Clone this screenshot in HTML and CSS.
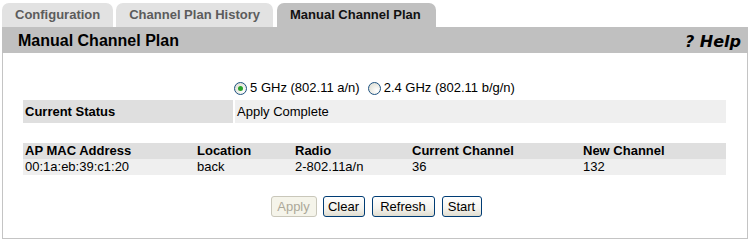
FILE: index.html
```html
<!DOCTYPE html>
<html>
<head>
<meta charset="utf-8">
<link rel="stylesheet" href="styles.css">
</head>
<body>
<div class="page">
  <div class="tabs">
    <div class="tab">Configuration</div>
    <div class="tab">Channel Plan History</div>
    <div class="tab tab-active">Manual Channel Plan</div>
  </div>
  <div class="titlebar">
    <div class="title">Manual Channel Plan</div>
    <div class="help">? Help</div>
  </div>
  <div class="panel">
    <div class="bands">
      <label class="band"><span class="radio radio-on"></span>5 GHz (802.11 a/n)</label>
      <label class="band"><span class="radio"></span>2.4 GHz (802.11 b/g/n)</label>
    </div>
    <div class="status">
      <div class="status-label">Current Status</div>
      <div class="status-value">Apply Complete</div>
    </div>
    <div class="aps">
      <div class="aps-head">AP MAC Address</div>
      <div class="aps-head">Location</div>
      <div class="aps-head">Radio</div>
      <div class="aps-head">Current Channel</div>
      <div class="aps-head">New Channel</div>
      <div class="aps-cell">00:1a:eb:39:c1:20</div>
      <div class="aps-cell">back</div>
      <div class="aps-cell">2-802.11a/n</div>
      <div class="aps-cell">36</div>
      <div class="aps-cell">132</div>
    </div>
    <div class="actions">
      <button class="btn btn-apply" disabled>Apply</button>
      <button class="btn btn-clear">Clear</button>
      <button class="btn btn-refresh">Refresh</button>
      <button class="btn btn-start">Start</button>
    </div>
  </div>
</div>
</body>
</html>
```
FILE: styles.css
```css
html, body {
  margin: 0;
  padding: 0;
  background: #fff;
}
body {
  font-family: "Liberation Sans", Arial, sans-serif;
  font-size: 13px;
  color: #000;
}
.page {
  width: 746px;
  margin-left: 2px;
  padding-top: 3px;
}
.tabs {
  display: flex;
  gap: 3px;
  height: 24px;
}
.tab {
  height: 24px;
  line-height: 24px;
  padding: 0 13px;
  background: #e2e2e2;
  color: #5c5c5c;
  font-weight: bold;
  border-radius: 7px 7px 0 0;
}
.tab-active {
  background: #c0c0c0;
  color: #111;
  padding: 0 15px 0 13px;
  margin-left: 1px;
}
.titlebar {
  display: flex;
  justify-content: space-between;
  align-items: center;
  height: 26px;
  background: #c0c0c0;
}
.title {
  font-size: 16px;
  font-weight: bold;
  padding-left: 16px;
  padding-top: 2px;
  color: #000;
}
.help {
  font-family: "DejaVu Sans", Verdana, sans-serif;
  font-size: 16px;
  font-weight: bold;
  font-style: italic;
  padding-right: 7px;
  padding-top: 2px;
  color: #000;
}
.panel {
  border: 1px solid #c4c4c4;
  border-top: none;
  padding: 27px 21px 21px 20px;
}
.bands {
  display: flex;
  justify-content: center;
  gap: 8px;
  height: 16px;
  line-height: 16px;
}
.band {
  display: flex;
  align-items: center;
  gap: 3px;
}
.radio {
  box-sizing: border-box;
  width: 13px;
  height: 13px;
  border-radius: 50%;
  border: 1px solid #1c5180;
  background: radial-gradient(circle at 70% 70%, #ffffff 0%, #e8e8e0 60%, #dcdcd4 100%);
  display: inline-flex;
  align-items: center;
  justify-content: center;
}
.radio-on::after {
  content: "";
  width: 5px;
  height: 5px;
  border-radius: 50%;
  background: #2aa32a;
}
.status {
  display: grid;
  grid-template-columns: 210px 1fr;
  gap: 2px;
  margin-top: 4px;
  height: 23px;
  line-height: 23px;
}
.status-label {
  background: #dfdfdf;
  font-weight: bold;
  padding-left: 2px;
}
.status-value {
  background: #efefef;
  padding-left: 2px;
}
.aps {
  display: grid;
  grid-template-columns: 172px 98px 117px 171px 1fr;
  margin-top: 20px;
  line-height: 16px;
}
.aps-head {
  background: #dfdfdf;
  font-weight: bold;
  padding-left: 2px;
}
.aps-cell {
  background: #efefef;
  padding-left: 2px;
}
.actions {
  display: flex;
  justify-content: center;
  gap: 7px;
  margin-top: 21px;
  padding-left: 3px;
}
.btn {
  box-sizing: border-box;
  height: 21px;
  padding: 0;
  font-family: "Liberation Sans", Arial, sans-serif;
  font-size: 13px;
  color: #000;
  border: 1px solid #003c74;
  border-radius: 3px;
  background: linear-gradient(#ffffff 0%, #f4f3ee 60%, #e0ddd0 100%);
}
.btn-apply {
  width: 46px;
  color: #aca899;
  border-color: #c9c7ba;
  background: #f5f4ea;
  margin-right: -1px;
}
.btn-clear { width: 42px; }
.btn-refresh { width: 63px; }
.btn-start { width: 40px; }
```
